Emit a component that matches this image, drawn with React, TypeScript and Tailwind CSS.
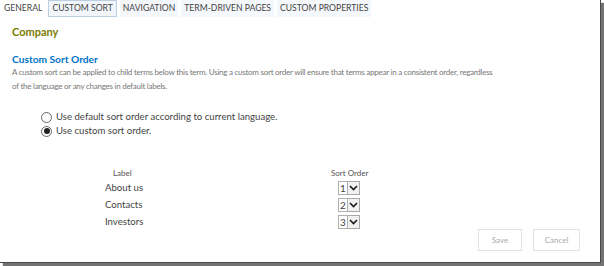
import * as React from 'react'

const tabs = ['GENERAL', 'CUSTOM SORT', 'NAVIGATION', 'TERM-DRIVEN PAGES', 'CUSTOM PROPERTIES']

const rows = [
  { label: 'About us', order: 1 },
  { label: 'Contacts', order: 2 },
  { label: 'Investors', order: 3 },
]

function Chevron() {
  return (
    <svg width="9" height="6" viewBox="0 0 9 6" fill="none" stroke="#1a1a1a" strokeWidth="1.6">
      <path d="M1 1l3.5 3.5L8 1" />
    </svg>
  )
}

function OrderSelect({ value }: { value: number }) {
  return (
    <div className="flex h-[14px] items-stretch">
      <div className="flex w-[10px] items-center justify-center border border-[#b0b0b0] bg-white text-[10px] leading-none text-[#444]">
        {value}
      </div>
      <div className="flex w-[12px] items-center justify-center border border-l-0 border-[#a8a8a8] bg-[#f1f1f1]">
        <Chevron />
      </div>
    </div>
  )
}

function Radio({ checked }: { checked?: boolean }) {
  return (
    <span className="flex h-[11px] w-[11px] items-center justify-center rounded-full border border-[#666] bg-white">
      {checked && <span className="h-[6px] w-[6px] rounded-full bg-[#222]" />}
    </span>
  )
}

export default function App() {
  return (
    <div className="h-[266px] w-[604px] bg-white" style={{ fontFamily: 'Lato, "Noto Sans", sans-serif' }}>
      <div className="relative h-[263px] w-[601px] border-r border-b border-[#4a4a4a] bg-white shadow-[3px_3px_1px_rgba(0,0,0,0.55)]">
        {/* Tabs */}
        <div className="flex h-[17px] items-stretch gap-[3px] pl-[1px] text-[8.6px] text-[#444]">
          {tabs.map((t) => (
            <div
              key={t}
              className={`flex items-center px-[3px] ${
                t === 'CUSTOM SORT'
                  ? 'border border-[#b9cde3] bg-[#f2f6fb]'
                  : t === 'GENERAL'
                    ? 'bg-white'
                    : 'bg-[#f4f7fb]'
              }`}
            >
              {t}
            </div>
          ))}
        </div>

        <div className="pl-[12px] pt-[8px]">
          <div className="text-[11px] font-bold leading-[14px] text-[#7a7a00]">Company</div>

          <div className="mt-[13px] text-[10.2px] font-bold leading-[14px] text-[#0072c6]">Custom Sort Order</div>
          <p className="whitespace-nowrap text-[8px] leading-[13.5px] tracking-[-0.25px] text-[#777]">
            A custom sort can be applied to child terms below this term. Using a custom sort order will ensure that
            terms appear in a consistent order, regardless
            <br />
            of the language or any changes in default labels.
          </p>

          <div className="mt-[17px] flex flex-col pl-[29px] text-[9.6px] leading-[14px] text-[#444]">
            <label className="flex items-center gap-[4px]">
              <Radio />
              Use default sort order according to current language.
            </label>
            <label className="flex items-center gap-[4px]">
              <Radio checked />
              Use custom sort order.
            </label>
          </div>

          <div className="mt-[29px] grid grid-cols-[226px_60px] items-center pl-[93px]">
            <div className="pl-[8px] text-[8px] leading-[12px] text-[#555]">Label</div>
            <div className="whitespace-nowrap text-[8px] leading-[12px] text-[#555]">Sort Order</div>
            {rows.map((r) => (
              <React.Fragment key={r.label}>
                <div className="h-[17px] text-[9.6px] leading-[17px] text-[#444]">{r.label}</div>
                <div className="flex h-[17px] items-center pl-[7px]">
                  <OrderSelect value={r.order} />
                </div>
              </React.Fragment>
            ))}
          </div>
        </div>

        <div className="absolute right-[20px] top-[229px] flex gap-[11px] text-[8px] text-[#aaa]">
          <div className="flex h-[22px] w-[44px] items-center justify-center border border-[#e2e2e2] bg-white">Save</div>
          <div className="flex h-[22px] w-[47px] items-center justify-center border border-[#e2e2e2] bg-white">Cancel</div>
        </div>
      </div>
    </div>
  )
}
